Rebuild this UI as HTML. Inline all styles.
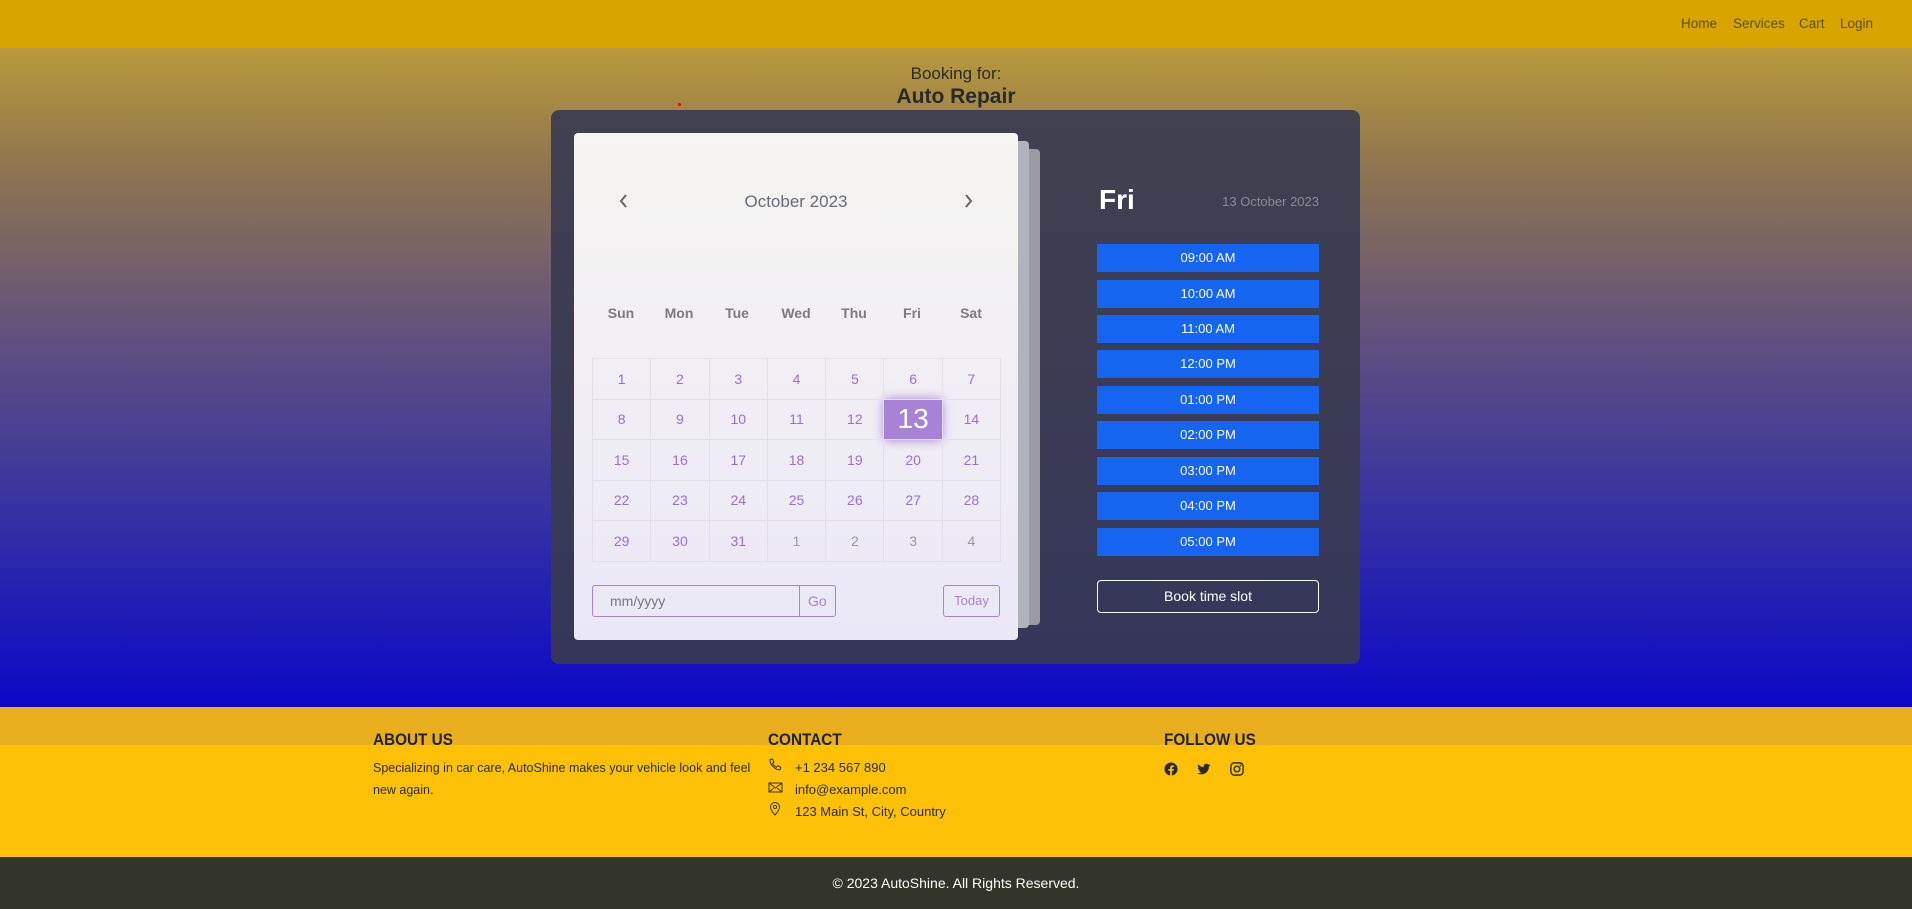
<!DOCTYPE html>
<html><head><meta charset="utf-8"><style>
*{box-sizing:border-box;margin:0;padding:0}
body{width:1912px;height:906px;overflow:hidden;font-family:"Liberation Sans",sans-serif;position:relative;background:#33342a}
.nav{position:absolute;left:0;top:0;width:1912px;height:48px;background:#d8a500}
.nav a{position:absolute;top:16px;font-size:13.5px;color:#5e5000;text-decoration:none}
.hero{position:absolute;top:48px;left:0;width:1912px;height:659px;background:linear-gradient(#b89a3c 0%,#8f7550 18%,#5f4f80 45%,#3a35a0 68%,#0a08c8 100%)}
.t1{position:absolute;top:64px;width:1912px;text-align:center;font-size:17px;color:#2a2a2a}
.t2{position:absolute;top:85px;width:1912px;text-align:center;font-size:21px;font-weight:bold;color:#2a2a2a}
.panel{position:absolute;left:551px;top:110px;width:809px;height:554px;border-radius:8px;background:linear-gradient(#41414f,#35365a)}
.pg{position:absolute;border-radius:4px}
.card{position:absolute;left:574px;top:133px;width:444px;height:507px;border-radius:4px;background:linear-gradient(#f6f5f2,#ebe8f6)}
.mh{position:absolute;top:192px;left:574px;width:444px;text-align:center;font-size:17px;color:#6a6a78}
.arr{position:absolute;top:193px}
.wd{position:absolute;top:305px;font-size:14px;font-weight:bold;color:#7a7a80;width:58px;text-align:center}
table{position:absolute;left:592px;top:358px;border-collapse:collapse}
td{width:58.3px;height:40.5px;border:1.5px solid #e3e0ea;text-align:center;font-size:14px;color:#9b6fd0}
td.g{color:#999}
td.s{background:#a882d6;color:#fff;font-size:28px;box-shadow:0 0 10px #a882d6}
.inp{position:absolute;left:592px;top:585px;width:244px;height:32px;border:1px solid #a882d6;border-radius:3px;font-size:14px;color:#777}
.today{position:absolute;left:943px;top:585px;width:57px;height:32px;border:1px solid #a882d6;border-radius:3px;font-size:13px;color:#a882d6;text-align:center;line-height:30px}
.fri{position:absolute;left:1099px;top:184px;font-size:28px;color:#fff;font-weight:bold}
.dt{position:absolute;left:1180px;width:139px;text-align:right;top:194px;font-size:13px;color:#8a8a9a}
.slot{position:absolute;left:1097px;width:222px;height:28px;background:#1565f0;color:#fff;font-size:13px;text-align:center;line-height:28px}
.book{position:absolute;left:1097px;top:580px;width:222px;height:33px;border:1px solid #fff;border-radius:4px;color:#fff;font-size:14px;text-align:center;line-height:31px}
.f1{position:absolute;top:707px;left:0;width:1912px;height:38px;background:#e8ae1e}
.f2{position:absolute;top:745px;left:0;width:1912px;height:112px;background:#ffc107}
.f3{position:absolute;top:857px;left:0;width:1912px;height:49px;background:#33342a;color:#fff;font-size:14px;text-align:center;line-height:52px}
.h{position:absolute;top:730px;font-size:17px;color:#1f2330;font-weight:bold;transform:scaleX(.9);transform-origin:left}
.p{position:absolute;font-size:13px;color:#2a2a2a;line-height:22px}
</style></head><body>
<div class="nav"><a style="left:1681px">Home</a><a style="left:1733px">Services</a><a style="left:1799px">Cart</a><a style="left:1840px">Login</a></div>
<div class="hero"></div>
<div class="t1">Booking for:</div><div class="t2">Auto Repair</div>
<div style="position:absolute;left:678px;top:103px;width:3px;height:3px;background:#e00;border-radius:50%"></div>
<div class="panel"></div>
<div class="pg" style="left:590px;top:149px;width:450px;height:476px;background:#9a9aa0"></div>
<div class="pg" style="left:585px;top:141px;width:444px;height:487px;background:#b2b2ba"></div>
<div class="card"></div>
<svg class="arr" style="left:618px" width="12" height="16" viewBox="0 0 12 16"><path d="M8 2L3 8l5 6" fill="none" stroke="#666" stroke-width="2"/></svg>
<svg class="arr" style="left:962px" width="12" height="16" viewBox="0 0 12 16"><path d="M4 2l5 6-5 6" fill="none" stroke="#666" stroke-width="2"/></svg>
<div class="mh">October 2023</div>
<div class="wd" style="left:592px">Sun</div><div class="wd" style="left:650px">Mon</div><div class="wd" style="left:708px">Tue</div><div class="wd" style="left:767px">Wed</div><div class="wd" style="left:825px">Thu</div><div class="wd" style="left:883px">Fri</div><div class="wd" style="left:942px">Sat</div>
<table>
<tr><td>1</td><td>2</td><td>3</td><td>4</td><td>5</td><td>6</td><td>7</td></tr>
<tr><td>8</td><td>9</td><td>10</td><td>11</td><td>12</td><td class="s">13</td><td>14</td></tr>
<tr><td>15</td><td>16</td><td>17</td><td>18</td><td>19</td><td>20</td><td>21</td></tr>
<tr><td>22</td><td>23</td><td>24</td><td>25</td><td>26</td><td>27</td><td>28</td></tr>
<tr><td>29</td><td>30</td><td>31</td><td class="g">1</td><td class="g">2</td><td class="g">3</td><td class="g">4</td></tr>
</table>
<div class="inp"><span style="position:absolute;left:17px;top:7px">mm/yyyy</span><span style="position:absolute;left:206px;top:0;height:30px;border-left:1px solid #a882d6;padding-left:8px;line-height:30px;color:#a882d6">Go</span></div>
<div class="today">Today</div>
<div class="fri">Fri</div><div class="dt">13 October 2023</div>
<div class="slot" style="top:244px">09:00 AM</div>
<div class="slot" style="top:280px">10:00 AM</div>
<div class="slot" style="top:315px">11:00 AM</div>
<div class="slot" style="top:350px">12:00 PM</div>
<div class="slot" style="top:386px">01:00 PM</div>
<div class="slot" style="top:421px">02:00 PM</div>
<div class="slot" style="top:457px">03:00 PM</div>
<div class="slot" style="top:492px">04:00 PM</div>
<div class="slot" style="top:528px">05:00 PM</div>
<div class="book">Book time slot</div>
<div class="f1"></div><div class="f2"></div>
<div class="f3">© 2023 AutoShine. All Rights Reserved.</div>
<div class="h" style="left:373px">ABOUT US</div>
<div class="h" style="left:768px">CONTACT</div>
<div class="h" style="left:1164px">FOLLOW US</div>
<div class="p" style="left:373px;top:757px;width:390px;font-size:12.5px">Specializing in car care, AutoShine makes your vehicle look and feel new again.</div>
<div class="p" style="left:768px;top:757px">
<div><svg width="27" height="14" viewBox="0 0 27 14"><path d="M2 1.5l2.5-.5 1.500 3-1.500 1.200a8 8 0 0 0 4 4L9.700 7.700l3 1.500-.5 2.500C7 12 1.500 6.500 2 1.500z" fill="none" stroke="#333" stroke-width="1"/></svg>+1 234 567 890</div>
<div><svg width="27" height="14" viewBox="0 0 27 14"><rect x="1" y="3" width="13" height="9" fill="none" stroke="#333"/><path d="M1 3l6.500 5L14 3M1 12l5-4M14 12l-5-4" fill="none" stroke="#333"/></svg>info@example.com</div>
<div><svg width="27" height="14" viewBox="0 0 27 14"><path d="M7 13s-4.500-5-4.500-8a4.500 4.500 0 0 1 9 0c0 3-4.500 8-4.500 8z" fill="none" stroke="#333"/><circle cx="7" cy="5" r="1.600" fill="none" stroke="#333"/></svg>123 Main St, City, Country</div></div>
<div style="position:absolute;left:1164px;top:762px;display:flex;gap:19px">
<svg width="14" height="14" viewBox="0 0 16 16"><circle cx="8" cy="8" r="7.5" fill="#2a2a2a"/><path d="M9 16V10h2l.3-2H9V6.8c0-.6.2-1 1-1h1.3V4a14 14 0 0 0-1.8-.1C7.900 3.900 7 4.800 7 6.500V8H5v2h2v6z" fill="#ffc107"/></svg>
<svg width="14" height="14" viewBox="0 0 16 16"><path d="M15.5 3.5a6 6 0 0 1-1.800.5 3 3 0 0 0 1.400-1.700 6 6 0 0 1-2 .8A3.100 3.100 0 0 0 7.700 5.900 8.800 8.800 0 0 1 1.300 2.600a3.100 3.100 0 0 0 1 4.100 3 3 0 0 1-1.400-.4 3.100 3.100 0 0 0 2.500 3 3 3 0 0 1-1.400.1 3.100 3.100 0 0 0 2.900 2.100A6.200 6.200 0 0 1 0 12.800 8.800 8.800 0 0 0 4.800 14.200c5.700 0 8.900-4.800 8.900-8.900v-.4a6 6 0 0 0 1.800-1.400z" fill="#2a2a2a"/></svg>
<svg width="14" height="14" viewBox="0 0 16 16"><rect x="1" y="1" width="14" height="14" rx="4" fill="none" stroke="#2a2a2a" stroke-width="1.600"/><circle cx="8" cy="8" r="3.200" fill="none" stroke="#2a2a2a" stroke-width="1.600"/><circle cx="12" cy="4" r="1" fill="#2a2a2a"/></svg>
</div>
</body></html>
